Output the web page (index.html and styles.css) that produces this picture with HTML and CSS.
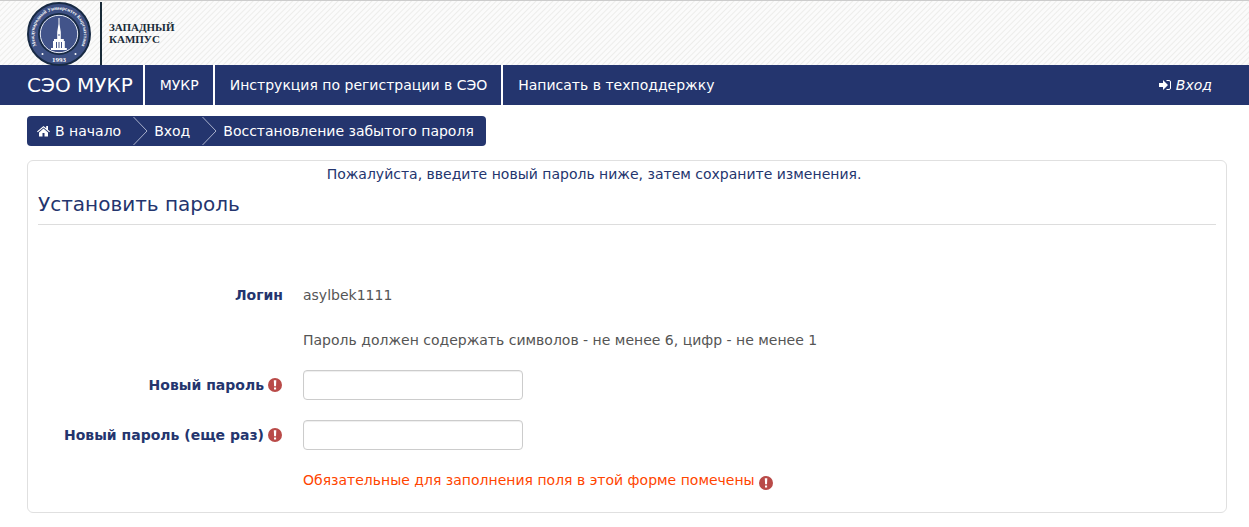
FILE: index.html
```html
<!DOCTYPE html>
<html lang="ru">
<head>
<meta charset="utf-8">
<meta name="viewport" content="width=device-width, initial-scale=1">
<title>Восстановление забытого пароля</title>
<link rel="stylesheet" href="styles.css">
</head>
<body>
<svg class="defs" aria-hidden="true">
  <symbol id="required" viewBox="0 0 14 14">
    <circle cx="7" cy="7" r="7" fill="#b94a48"/>
    <path d="M5.8 2.2h2.5L8 8.3H6.1zM6 9.4h2.1v2.1H6z" fill="#fff"/>
  </symbol>
</svg>
<header class="header">
  <svg class="seal" viewBox="0 0 64 64" role="img" aria-label="Международный Университет Кыргызстана">
    <defs>
      <path id="ring" d="M14.500 50.500A25 25 0 1 1 49.500 50.500"/>
    </defs>
    <circle cx="32" cy="32" r="31" fill="#3d5083" stroke="#182a44" stroke-width="2"/>
    <circle cx="32" cy="32" r="20" fill="#42548a" stroke="#182a44" stroke-width="2"/>
    <circle cx="32" cy="32" r="18.7" fill="none" stroke="#e4e8f1"/>
    <path d="M31.500 16h1v6l1.300 8v7h3v2h1v7h2v2H24v-2h2v-7h1v-2h3.200v-7l1.300-8z" fill="#fff"/>
    <path d="M29.500 40v6M32 40v6M34.500 40v6M31 33h2" stroke="#42548a" fill="none"/>
    <circle cx="15.500" cy="52" r="1" fill="#fff"/>
    <circle cx="48.500" cy="52" r="1" fill="#fff"/>
    <text class="seal-text"><textPath href="#ring" startOffset="50%" text-anchor="middle">Международный Университет Кыргызстана</textPath></text>
    <text class="seal-year" x="32" y="60" text-anchor="middle">1993</text>
  </svg>
  <p class="campus">ЗАПАДНЫЙ<br>КАМПУС</p>
</header>
<nav class="nav">
  <a class="brand" href="#">СЭО МУКР</a>
  <a class="nav-link" href="#">МУКР</a>
  <a class="nav-link" href="#">Инструкция по регистрации в СЭО</a>
  <a class="nav-link" href="#">Написать в техподдержку</a>
  <a class="login" href="#">
    <svg class="login-icon" viewBox="0 0 12 12" aria-hidden="true"><path d="M0 4h4V1l5 5-5 5V8H0z" fill="#fff"/><path d="M7.500 1.500H10q1.500 0 1.500 1.500v6q0 1.500-1.500 1.500H7.500" fill="none" stroke="#fff"/></svg>
    <em>Вход</em>
  </a>
</nav>
<main class="page">
  <nav class="crumbs" aria-label="Навигация">
    <a class="crumb" href="#"><svg class="home" viewBox="0 0 13 12" aria-hidden="true"><path d="M6.500 1 0 6.500l.8.800 5.700-4.800 5.700 4.800.8-.8-2-1.700V1H9.200v2.200zM6.500 3.600 2 7.400V11.500h3.500V8h2v3.500H11V7.400z" fill="#fff"/></svg>В начало</a>
    <svg class="sep" viewBox="0 0 15 30" aria-hidden="true"><path d="M.5 1 14 15 .5 29" fill="none" stroke="#a8b0cb"/></svg>
    <a class="crumb" href="#">Вход</a>
    <svg class="sep" viewBox="0 0 15 30" aria-hidden="true"><path d="M.5 1 14 15 .5 29" fill="none" stroke="#a8b0cb"/></svg>
    <span class="crumb">Восстановление забытого пароля</span>
  </nav>
  <section class="card">
    <p class="notice">Пожалуйста, введите новый пароль ниже, затем сохраните изменения.</p>
    <h1 class="title">Установить пароль</h1>
    <form class="form">
      <span class="label">Логин</span>
      <span class="value">asylbek1111</span>
      <p class="hint">Пароль должен содержать символов - не менее 6, цифр - не менее 1</p>
      <label class="label" for="password">Новый пароль<svg class="mark" aria-hidden="true"><use href="#required"/></svg></label>
      <input class="input" id="password" type="password" required>
      <label class="label" for="password2">Новый пароль (еще раз)<svg class="mark" aria-hidden="true"><use href="#required"/></svg></label>
      <input class="input" id="password2" type="password" required>
      <p class="hint required-note">Обязательные для заполнения поля в этой форме помечены <svg class="mark" aria-hidden="true"><use href="#required"/></svg></p>
    </form>
  </section>
</main>
</body>
</html>
```

FILE: styles.css
```css
* { box-sizing: border-box; }
body {
  margin: 0;
  background: #fff;
  color: #555;
  font: 14px/20px Verdana, "DejaVu Sans", sans-serif;
}
p, h1 { margin: 0; }
a { color: inherit; text-decoration: none; }
.defs { position: absolute; width: 0; height: 0; }

.header {
  display: flex;
  height: 65px;
  padding: 1px 27px 0;
  border-top: 1px solid #ccc;
  background: repeating-linear-gradient(135deg, #fbfbfb 0 2px, #ededeb 3px, #fbfbfb 4px);
}
.seal { width: 64px; height: 64px; }
.seal-text { font: bold 5px "Liberation Serif", serif; fill: #fff; }
.seal-year { font: bold 7px "Liberation Serif", serif; fill: #fff; }
.campus {
  margin-left: 9px;
  padding: 19px 0 0 7px;
  border-left: 2px solid #182a38;
  color: #182a38;
  font: bold 11px/12px "Liberation Serif", serif;
}

.nav {
  display: flex;
  height: 40px;
  padding: 0 37px 0 27px;
  background: #24356e;
  color: #fff;
  line-height: 40px;
}
.brand { padding-right: 10px; font-size: 20px; }
.nav-link { padding: 0 14px 0 15px; border-left: 2px solid #fff; }
.login { display: flex; align-items: center; gap: 5px; margin-left: auto; }
.login-icon { width: 12px; height: 12px; }

.page { padding: 11px 22px 14px 27px; }
.crumbs {
  display: inline-flex;
  height: 30px;
  padding: 0 12px 0 10px;
  border-radius: 4px;
  background: #24356e;
  color: #fff;
  line-height: 30px;
  vertical-align: top;
}
.home { width: 13px; height: 12px; margin-right: 5px; vertical-align: -1px; }
.sep { width: 15px; height: 30px; margin: 0 6px 0 12px; }

.card {
  margin-top: 14px;
  padding: 3px 10px 22px;
  border: 1px solid #e0e0e0;
  border-radius: 6px;
}
.notice { padding-right: 66px; color: #24356e; text-align: center; }
.title {
  border-bottom: 1px solid #ddd;
  color: #24356e;
  font-size: 20px;
  font-weight: normal;
  line-height: 40px;
}
.form {
  display: grid;
  grid-template-columns: 245px 1fr;
  gap: 20px;
  align-items: center;
  margin-top: 60px;
}
.label { color: #24356e; font-weight: bold; text-align: right; }
.mark { width: 14px; height: 14px; margin: 0 1px 0 4px; vertical-align: -2px; }
.hint { grid-column: 2; margin-top: 5px; }
.input {
  width: 220px;
  height: 30px;
  padding: 4px 6px;
  border: 1px solid #ccc;
  border-radius: 4px;
  background: #fff;
  box-shadow: inset 0 1px 1px #eee;
  font: inherit;
}
.required-note { margin: 0; color: #ff4500; }
.required-note .mark { margin-left: 0; vertical-align: -5px; }
```
